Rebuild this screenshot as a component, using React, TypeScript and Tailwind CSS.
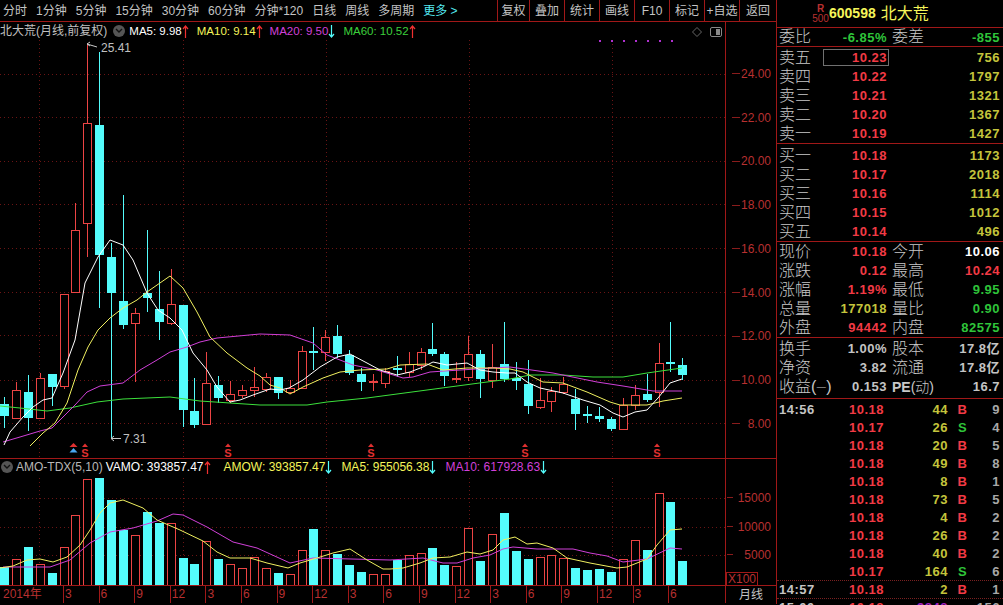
import React from 'react';

const LINE = 'border-[#a01818]';

const tabs = ['分时', '1分钟', '5分钟', '15分钟', '30分钟', '60分钟', '分钟*120', '日线', '周线', '多周期'];
const tools = ['复权', '叠加', '统计', '画线', 'F10', '标记', '+自选', '返回'];
const months = ['3', '6', '9', '12', '3', '6', '9', '12', '3', '6', '9', '12', '3', '6', '9', '12', '3', '6'];

// [colour, high, body top, body bottom, low] in screen pixels
type Candle = ['r' | 'c', number, number, number, number];
const candles: Candle[] = [
  ['c', 397, 404, 416, 428], ['r', 382, 390, 418, 418], ['c', 375, 392, 418, 431], ['r', 373, 378, 418, 418],
  ['c', 374, 374, 387, 406], ['r', 294, 294, 386, 389], ['r', 203, 230, 292, 292], ['r', 43, 123, 223, 257],
  ['c', 52, 125, 255, 308], ['c', 243, 257, 293, 438], ['c', 195, 301, 325, 329], ['r', 308, 313, 323, 382],
  ['c', 230, 293, 298, 312], ['c', 271, 309, 322, 340], ['r', 269, 304, 323, 325], ['c', 305, 305, 410, 427],
  ['c', 378, 411, 425, 428], ['r', 352, 383, 424, 424], ['c', 376, 385, 398, 403], ['r', 381, 394, 400, 403],
  ['r', 385, 390, 395, 398], ['r', 367, 387, 390, 397], ['r', 373, 377, 389, 392], ['c', 377, 377, 393, 399],
  ['r', 380, 388, 392, 394], ['r', 346, 351, 388, 389], ['c', 327, 351, 353, 370], ['r', 330, 337, 352, 361],
  ['c', 325, 336, 354, 358], ['c', 350, 355, 373, 375], ['c', 368, 374, 382, 391], ['r', 374, 381, 382, 391],
  ['r', 368, 371, 383, 388], ['c', 356, 368, 370, 377], ['r', 352, 364, 372, 377], ['r', 348, 352, 365, 370],
  ['c', 323, 349, 354, 356], ['c', 352, 354, 376, 386], ['r', 362, 378, 379, 383], ['r', 336, 354, 377, 381],
  ['c', 350, 354, 379, 398], ['r', 344, 367, 380, 388], ['c', 322, 364, 379, 382], ['c', 362, 378, 381, 390],
  ['c', 360, 384, 406, 414], ['r', 378, 400, 407, 409], ['r', 387, 391, 401, 412], ['r', 377, 384, 392, 394],
  ['c', 389, 399, 414, 430], ['c', 406, 414, 415, 423], ['c', 407, 416, 419, 422], ['c', 417, 419, 429, 431],
  ['r', 398, 405, 429, 429], ['r', 385, 395, 405, 410], ['c', 374, 394, 400, 402], ['r', 343, 363, 392, 407],
  ['c', 322, 362, 363, 372], ['c', 358, 365, 375, 380],
];

const ma5 = '4,445 10,432 23,417 33,407 43,400 52,398 63,373 75,340 85,283 98,257 110,240 123,245 133,260 147,293 158,310 170,318 182,330 193,353 207,370 217,387 230,402 240,400 253,395 270,389 280,390 289,388 303,380 320,367 337,357 350,354 367,363 380,370 397,375 410,372 423,367 433,362 447,365 467,363 480,370 493,372 507,373 515,373 527,382 540,388 563,393 583,400 600,405 613,413 623,417 635,412 647,410 658,398 670,383 682,379';
const ma10 = '30,446 43,433 55,423 67,403 78,370 88,347 98,330 110,318 123,308 137,300 147,292 170,276 183,288 197,312 210,337 227,353 247,368 260,376 270,385 280,388 290,394 303,387 323,378 340,372 360,370 387,369 400,365 427,364 443,370 467,368 493,368 510,369 523,372 543,382 563,383 587,392 610,402 620,405 647,405 663,401 682,398';
const ma20 = '3,442 20,437 40,431 52,428 63,417 75,405 87,392 100,386 123,383 140,370 157,360 170,352 187,347 200,342 217,338 260,334 290,335 313,343 327,355 353,365 377,370 403,378 413,377 430,372 460,370 493,368 510,367 553,373 597,382 623,386 653,391 682,391';
const ma60 = '0,406 20,408 47,411 70,408 97,402 123,399 170,397 200,401 260,405 307,405 327,402 367,398 427,390 487,382 510,379 530,375 563,375 593,377 623,377 647,373 682,368';

// bar tops in screen pixels
const volumes: ['r' | 'c', number][] = [
  ['c', 567], ['r', 559], ['c', 547], ['r', 564], ['c', 573], ['r', 547], ['r', 515], ['r', 479], ['c', 478], ['c', 500],
  ['c', 530], ['r', 535], ['c', 512], ['c', 523], ['r', 523], ['c', 558], ['c', 564], ['r', 541], ['c', 559], ['r', 564],
  ['r', 568], ['r', 557], ['r', 568], ['c', 573], ['r', 574], ['r', 550], ['c', 529], ['r', 550], ['c', 554], ['c', 565],
  ['c', 572], ['r', 574], ['r', 574], ['c', 560], ['r', 555], ['r', 553], ['c', 548], ['c', 565], ['r', 566], ['r', 528],
  ['c', 561], ['r', 534], ['c', 513], ['c', 551], ['c', 559], ['r', 557], ['r', 555], ['r', 558], ['c', 568], ['c', 570],
  ['c', 569], ['c', 572], ['r', 559], ['r', 540], ['c', 550], ['r', 493], ['c', 502], ['c', 561],
];

const amow = '0,568 13,566 27,560 40,559 53,562 67,557 80,545 90,530 100,513 110,503 123,500 143,508 157,520 180,530 203,541 217,552 230,558 250,558 267,563 288,568 300,563 317,558 333,553 350,549 367,560 383,569 390,569 403,568 420,563 433,558 450,557 467,552 480,554 493,550 503,540 515,537 527,544 537,543 553,548 567,558 590,563 617,568 627,567 647,559 657,545 670,530 682,529';
const vma10 = '3,567 50,567 70,560 90,543 110,532 133,528 157,521 173,514 183,515 207,527 233,542 257,548 290,563 313,558 390,560 423,558 443,563 457,563 473,558 490,555 503,549 513,547 537,549 573,549 590,553 607,556 623,562 647,559 670,548 682,549';

const sellRows = [
  ['卖五', '10.23', '756'], ['卖四', '10.22', '1797'], ['卖三', '10.21', '1321'], ['卖二', '10.20', '1367'], ['卖一', '10.19', '1427'],
];
const buyRows = [
  ['买一', '10.18', '1173'], ['买二', '10.17', '2018'], ['买三', '10.16', '1114'], ['买四', '10.15', '1012'], ['买五', '10.14', '496'],
];
const RED = 'text-[#f23a45]';
const GREEN = 'text-[#2fc43a]';
const OLIVE = 'text-[#c4c43c]';
const GRAY = 'text-[#c4c4c4]';
const quoteRows = [
  ['现价', '10.18', RED, '今开', '10.06', 'text-white'],
  ['涨跌', '0.12', RED, '最高', '10.24', RED],
  ['涨幅', '1.19%', RED, '最低', '9.95', GREEN],
  ['总量', '177018', OLIVE, '量比', '0.90', GREEN],
  ['外盘', '94442', RED, '内盘', '82575', GREEN],
];
const statRows = [
  ['换手', '1.00%', '股本', '17.8亿'],
  ['净资', '3.82', '流通', '17.8亿'],
];
const ticks = [
  ['14:56', '10.18', '44', 'B', '9'], ['', '10.17', '26', 'S', '4'], ['', '10.18', '20', 'B', '5'], ['', '10.18', '49', 'B', '8'],
  ['', '10.18', '8', 'B', '1'], ['', '10.18', '73', 'B', '5'], ['', '10.18', '4', 'B', '2'], ['', '10.18', '26', 'B', '2'],
  ['', '10.18', '40', 'B', '2'], ['', '10.17', '164', 'S', '6'],
];

const Arrow = ({ up }: { up?: boolean }) => (
  <svg width="7" height="13" viewBox="0 0 7 13" className="shrink-0">
    {up ? (
      <path d="M3.5 1 L3.5 13 M1 4 L3.5 1 L6 4" stroke="#f03030" strokeWidth="1.2" fill="none" />
    ) : (
      <path d="M3.5 0 L3.5 12 M1 9 L3.5 12 L6 9" stroke="#54fcfc" strokeWidth="1.2" fill="none" />
    )}
  </svg>
);

const Chevron = () => (
  <span className="flex w-[12px] h-[12px] items-center justify-center rounded-full bg-[#555] shrink-0">
    <svg width="8" height="6" viewBox="0 0 8 6"><path d="M1 1 L4 4 L7 1" stroke="#111" strokeWidth="1.4" fill="none" /></svg>
  </span>
);

const Marker = ({ x }: { x: number }) => (
  <g>
    <path d={`M${x - 3} 447 L${x} 443.5 L${x + 3} 447 Z`} fill="#e03030" />
    <text x={x} y={457} textAnchor="middle" fontSize="11" fontWeight="bold" fill="#e03030">S</text>
  </g>
);

const Label = ({ children }: { children: React.ReactNode }) => (
  <span className="text-[16px] leading-none text-[#c8c8c8] font-light whitespace-nowrap">{children}</span>
);

const Num = ({ children, className = '' }: { children: React.ReactNode; className?: string }) => (
  <span className={`text-[13px] leading-none font-bold tracking-[0.5px] ${className}`}>{children}</span>
);

const candleX = (i: number) => Math.round(4 + i * 11.9) + 0.5;

function PriceChart() {
  return (
    <svg width="725" height="436" viewBox="0 22 725 436" className="block">
      <g stroke="#6a1414" strokeDasharray="1 3" shapeRendering="crispEdges">
        {[74, 117, 161, 204, 248, 292, 335, 380, 423].map((y) => <line key={y} x1="0" x2="725" y1={y} y2={y} />)}
        {[39, 183, 326, 469, 612].map((x) => <line key={x} x1={x} x2={x} y1="40" y2="458" />)}
      </g>
      {[599, 611, 623, 635, 647, 659, 671].map((x) => <rect key={x} x={x} y="40" width="2" height="2" fill="#b030d0" />)}
      <path d="M697 27.5 L701.5 32 L697 36.5 L692.5 32 Z" stroke="#666" fill="none" />
      <rect x="710.5" y="27.5" width="11" height="9" rx="1.5" stroke="#888" fill="none" />
      <rect x="716" y="29" width="4" height="6" fill="#888" />
      <g shapeRendering="crispEdges">
        {candles.map(([c, hi, top, bottom, lo], i) => {
          const x = candleX(i);
          const color = c === 'r' ? '#ec4444' : '#54fcfc';
          return (
            <g key={i}>
              <line x1={x} x2={x} y1={hi} y2={top} stroke={color} />
              <line x1={x} x2={x} y1={bottom} y2={lo} stroke={color} />
              {c === 'r' ? (
                <rect x={x - 4} y={top + 0.5} width="8" height={Math.max(bottom - top, 1)} fill="#000" stroke={color} />
              ) : (
                <rect x={x - 4.5} y={top} width="9" height={Math.max(bottom - top, 2)} fill={color} />
              )}
            </g>
          );
        })}
      </g>
      <polyline points={ma60} fill="none" stroke="#3ce03c" />
      <polyline points={ma20} fill="none" stroke="#d040d8" />
      <polyline points={ma10} fill="none" stroke="#f0f060" />
      <polyline points={ma5} fill="none" stroke="#ffffff" />
      <path d="M97 47 L87 44 M87 44 L90 42 M87 44 L90 46" stroke="#c8c8c8" fill="none" />
      <text x="101" y="52" fontSize="12" fill="#c0c0c0">25.41</text>
      <path d="M121 438.5 L111 438.5 M111 438.5 L114 436 M111 438.5 L114 441" stroke="#c8c8c8" fill="none" />
      <text x="123" y="443" fontSize="12" fill="#c0c0c0">7.31</text>
      <path d="M69.5 447 L73.5 443 L77.5 447 Z" fill="#e03030" />
      <path d="M69.5 452.5 L73.5 448 L77.5 452.5 Z" fill="#4aa8f0" />
      {[85, 228, 371, 525, 657].map((x) => <Marker key={x} x={x} />)}
    </svg>
  );
}

function VolumeChart() {
  return (
    <svg width="725" height="126" viewBox="0 459 725 126" className="block">
      <g stroke="#6a1414" strokeDasharray="1 3" shapeRendering="crispEdges">
        {[498, 527, 555].map((y) => <line key={y} x1="0" x2="725" y1={y} y2={y} />)}
        {[39, 183, 326, 469, 612].map((x) => <line key={x} x1={x} x2={x} y1="478" y2="585" />)}
      </g>
      <g shapeRendering="crispEdges">
        {volumes.map(([c, top], i) => {
          const x = candleX(i);
          return c === 'r' ? (
            <rect key={i} x={x - 4} y={top + 0.5} width="8" height={585 - top} fill="#000" stroke="#ec4444" />
          ) : (
            <rect key={i} x={x - 4.5} y={top} width="9" height={585 - top} fill="#54fcfc" />
          );
        })}
      </g>
      <polyline points={vma10} fill="none" stroke="#d040d8" />
      <polyline points={amow} fill="none" stroke="#f0f060" />
    </svg>
  );
}

function TickRow({ t, p, q, s, n, purple, className = '' }: { t: string; p: string; q: string; s: string; n: string; purple?: boolean; className?: string }) {
  return (
    <div className={`flex h-[18px] shrink-0 items-center pl-[2px] pr-[3px] ${className}`}>
      <Num className={`w-[40px] ${GRAY}`}>{t}</Num>
      <div className="flex w-[65px] justify-end"><Num className={RED}>{p}</Num></div>
      <div className="flex w-[64px] justify-end"><Num className={purple ? 'text-[#a020c0]' : OLIVE}>{q}</Num></div>
      <div className="flex w-[20px] justify-center pl-[9px]"><Num className={s === 'S' ? GREEN : RED}>{s}</Num></div>
      <div className="flex flex-1 justify-end"><Num className="text-[#a8a8a8]">{n}</Num></div>
    </div>
  );
}

export default function App() {
  return (
    <div className="flex w-[1003px] h-[605px] overflow-hidden bg-black font-['Liberation_Sans','Noto_Sans_CJK_SC',sans-serif]">
      {/* Left: toolbar, charts */}
      <div className={`flex flex-col w-[777px] h-[604px] border-r ${LINE}`}>
        <div className={`flex h-[22px] shrink-0 items-stretch border-b ${LINE}`}>
          <div className="flex w-[497px] shrink-0 items-center gap-[9px] pl-[3px] text-[12px] text-[#c4c4c4]">
            {tabs.map((t) => <span key={t} className="whitespace-nowrap">{t}</span>)}
            <span className="whitespace-nowrap text-[#54e8f0]">更多 &gt;</span>
          </div>
          {tools.map((t, i) => (
            <div key={t} className={`flex items-center justify-center border-l ${LINE} text-[12px] text-[#c4c4c4] whitespace-nowrap ${i === 0 ? 'w-[32px]' : i === 7 ? 'flex-1' : 'w-[35px]'}`}>{t}</div>
          ))}
        </div>

        <div className={`flex h-[437px] shrink-0 border-b ${LINE}`}>
          <div className={`relative w-[726px] border-r ${LINE}`}>
            <PriceChart />
            <div className="absolute left-0 top-[2px] flex items-center text-[11.5px] leading-[14px] whitespace-nowrap">
              <span className="text-[12px] text-[#c0c0c0]">北大荒(月线,前复权)</span>
              <span className="ml-[6px]"><Chevron /></span>
              <span className="ml-[4px] text-white">MA5: 9.98</span><Arrow up />
              <span className="ml-[8px] text-[#f5f55a]">MA10: 9.14</span><Arrow up />
              <span className="ml-[7px] text-[#d040d8]">MA20: 9.50</span><Arrow />
              <span className="ml-[8px] text-[#3cd03c]">MA60: 10.52</span><Arrow up />
            </div>
          </div>
          <div className="flex flex-1 flex-col pt-[30px]">
            {['24.00', '22.00', '20.00', '18.00', '16.00', '14.00', '12.00', '10.00', '8.00'].map((p) => (
              <div key={p} className="flex h-[43.75px] shrink-0 items-center justify-between pl-[6px] pr-[5px] text-[12px] leading-none text-[#b83030]">
                <span className="w-[8px] border-t border-[#8a1c1c]" />
                {p}
              </div>
            ))}
          </div>
        </div>

        <div className={`flex h-[127px] shrink-0 border-b ${LINE}`}>
          <div className={`relative w-[726px] border-r ${LINE}`}>
            <VolumeChart />
            <div className="absolute left-0 top-[1px] flex items-center text-[12px] leading-[14px] whitespace-nowrap">
              <span className="ml-[1px]"><Chevron /></span>
              <span className="ml-[3px] text-[#b8b8b8]">AMO-TDX(5,10)</span>
              <span className="ml-[3px] text-white">VAMO: 393857.47</span><Arrow up />
              <span className="ml-[13px] text-[#f5f55a]">AMOW: 393857.47</span><Arrow />
              <span className="ml-[9px] text-[#f5f55a]">MA5: 955056.38</span><Arrow />
              <span className="ml-[9px] text-[#d040d8]">MA10: 617928.63</span><Arrow />
            </div>
          </div>
          <div className="flex flex-1 flex-col pt-[32px] text-[12px] text-[#b83030]">
            {['15000', '10000', '5000'].map((v) => (
              <div key={v} className="flex h-[28.5px] shrink-0 items-start justify-between pl-[1px] pr-[5px] leading-[14px]">
                <span className="mt-[6px] w-[6px] border-t border-[#8a1c1c]" />
                {v}
              </div>
            ))}
            <div className={`mt-[-5px] w-[32px] h-[14px] border ${LINE} text-center leading-[12px]`}>X100</div>
          </div>
        </div>

        <div className="flex h-[17px] shrink-0">
          <div className={`flex w-[726px] border-r ${LINE} text-[12px] leading-[17px] text-[#b83030]`}>
            <div className="w-[63px] shrink-0 pl-[3px]">2014年</div>
            {months.map((m, i) => (
              <div key={i} className={`w-[35.6px] shrink-0 border-l ${LINE} pl-[1px]`}>{m}</div>
            ))}
          </div>
          <div className="flex flex-1 items-center justify-center text-[12px] text-[#c4c4c4]">月线</div>
        </div>
      </div>

      {/* Right: quote panel */}
      <div className="flex flex-col w-[226px] h-[605px] overflow-hidden">
        <div className={`flex h-[28px] shrink-0 items-center border-b ${LINE} pl-[36px]`}>
          <div className="flex w-[15px] flex-col items-center text-[10px] leading-[10px] text-[#b83030]">
            <span className="font-bold">R</span><span>500</span>
          </div>
          <span className="ml-[1px] text-[14px] font-bold text-[#f5f55a]">600598</span>
          <span className="ml-[5px] text-[16px] text-[#f5f55a]">北大荒</span>
        </div>

        <div className={`flex h-[19px] shrink-0 items-center border-b ${LINE} pl-[2px] pr-[3px]`}>
          <div className="w-[32px]"><Label>委比</Label></div>
          <div className="flex w-[76px] justify-end"><Num className={GREEN}>-6.85%</Num></div>
          <span className="ml-[5px]"><Label>委差</Label></span>
          <Num className={`ml-auto ${GREEN}`}>-855</Num>
        </div>

        <div className={`flex flex-col py-[1px] h-[97px] shrink-0 border-b ${LINE}`}>
          {sellRows.map(([l, p, q], i) => (
            <div key={l} className="flex h-[19px] items-center pl-[2px] pr-[3px]">
              <div className="w-[32px]"><Label>{l}</Label></div>
              <div className={`ml-[12px] flex h-[17px] w-[66px] items-center justify-end pr-[1px] ${i === 0 ? 'border border-[#707070]' : 'border border-transparent'}`}>
                <Num className={RED}>{p}</Num>
              </div>
              <Num className={`ml-auto ${OLIVE}`}>{q}</Num>
            </div>
          ))}
        </div>

        <div className={`flex flex-col pt-[2px] h-[98px] shrink-0 border-b ${LINE}`}>
          {buyRows.map(([l, p, q]) => (
            <div key={l} className="flex h-[19px] items-center pl-[2px] pr-[3px]">
              <div className="w-[32px]"><Label>{l}</Label></div>
              <div className="flex w-[76px] justify-end"><Num className={RED}>{p}</Num></div>
              <Num className={`ml-auto ${OLIVE}`}>{q}</Num>
            </div>
          ))}
        </div>

        <div className={`flex flex-col h-[96px] shrink-0 border-b ${LINE}`}>
          {quoteRows.map(([l, p, pc, l2, v, vc]) => (
            <div key={l} className="flex h-[19px] items-center pl-[2px] pr-[3px]">
              <div className="w-[32px]"><Label>{l}</Label></div>
              <div className="flex w-[76px] justify-end"><Num className={pc}>{p}</Num></div>
              <span className="ml-[5px]"><Label>{l2}</Label></span>
              <Num className={`ml-auto ${vc}`}>{v}</Num>
            </div>
          ))}
        </div>

        <div className={`flex flex-col h-[61px] shrink-0 border-b ${LINE} pt-[1px]`}>
          {statRows.map(([l, p, l2, v]) => (
            <div key={l} className="flex h-[19px] items-center pl-[2px] pr-[3px]">
              <div className="w-[32px]"><Label>{l}</Label></div>
              <div className="flex w-[76px] justify-end"><Num className={GRAY}>{p}</Num></div>
              <span className="ml-[5px]"><Label>{l2}</Label></span>
              <Num className={`ml-auto ${GRAY}`}>{v}</Num>
            </div>
          ))}
          <div className="flex h-[19px] items-center pl-[2px] pr-[3px]">
            <div className="w-[32px]"><Label>收益(<span className="text-[10px]">一</span>)</Label></div>
            <div className="flex w-[76px] justify-end"><Num className={GRAY}>0.153</Num></div>
            <span className="ml-[5px] text-[14px] leading-none text-[#c8c8c8] font-bold whitespace-nowrap">PE<span className="font-light">(动)</span></span>
            <Num className={`ml-auto ${GRAY}`}>16.7</Num>
          </div>
        </div>

        <div className="flex flex-col pt-[1px]">
          {ticks.map(([t, p, q, s, n], i) => (
            <TickRow key={i} t={t} p={p} q={q} s={s} n={n} />
          ))}
          <TickRow t="14:57" p="10.18" q="2" s="B" n="1" className="border-t border-dotted border-[#7a2020]" />
          <TickRow t="15:00" p="10.18" q="9848" s="" n="156" purple className="border-t border-dotted border-[#7a2020]" />
        </div>
      </div>
    </div>
  );
}
